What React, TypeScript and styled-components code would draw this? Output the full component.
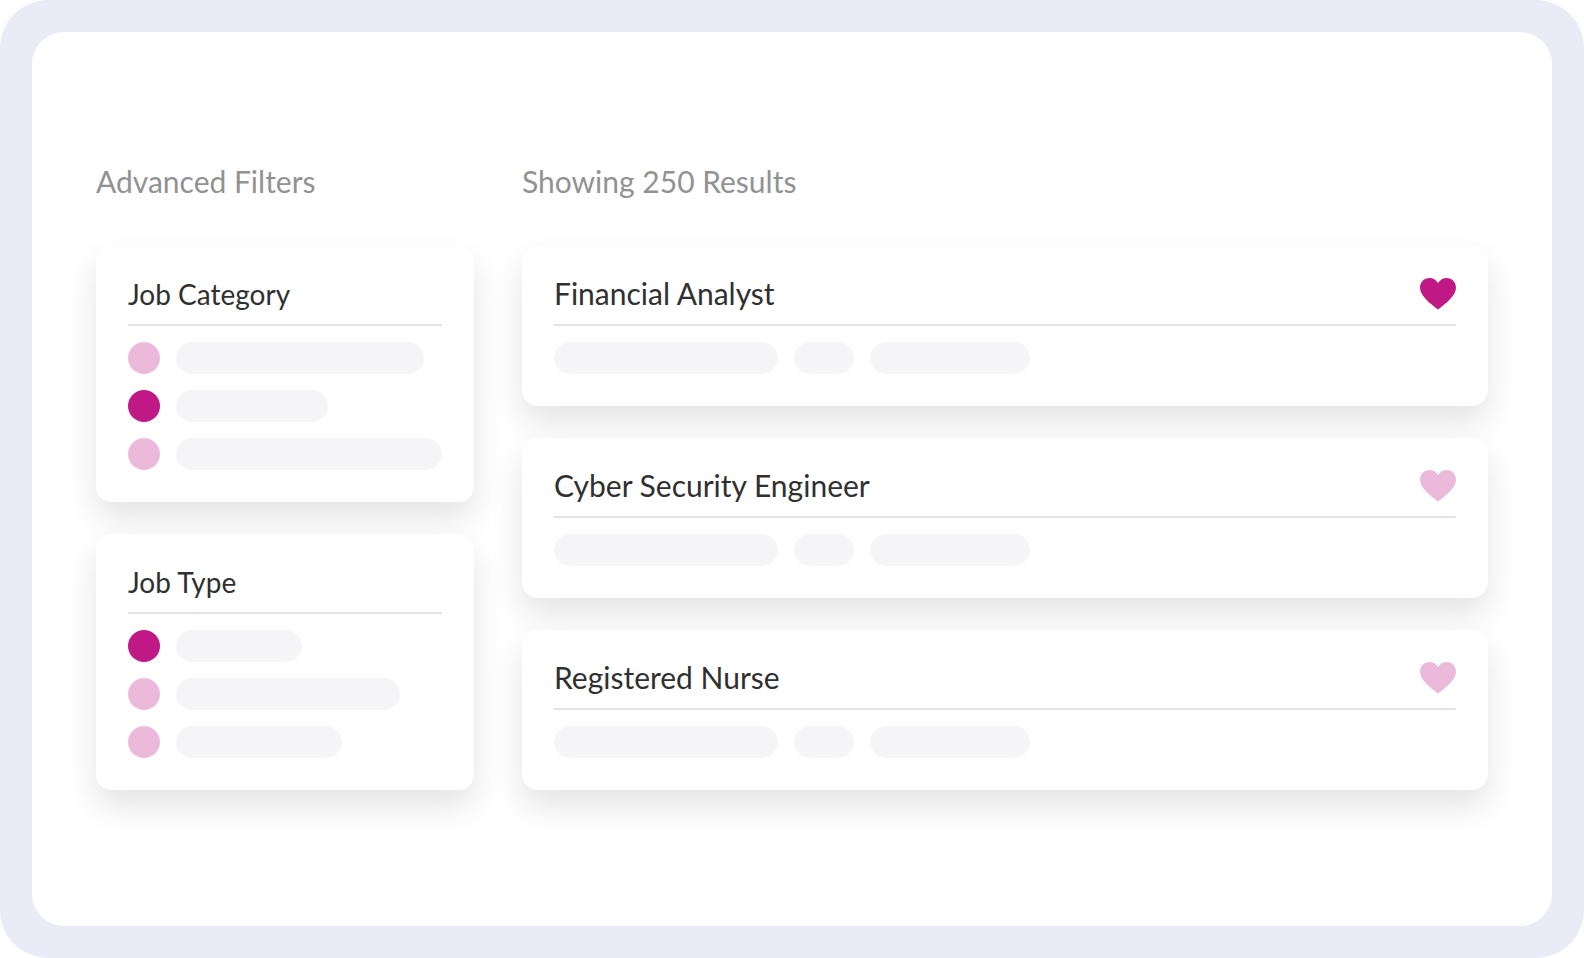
import React, { useState } from "react";
import styled, { createGlobalStyle } from "styled-components";

const GlobalStyle = createGlobalStyle`
  *, *::before, *::after { box-sizing: border-box; }
  body {
    margin: 0;
    background: #ffffff;
    font-family: Lato, "Liberation Sans", sans-serif;
    color: #303030;
  }
`;

const Frame = styled.div`
  display: flex;
  min-height: 100vh;
  padding: 32px;
  border-radius: 48px;
  background: #ebebf8;
`;

const Panel = styled.main`
  flex: 1;
  display: grid;
  grid-template-columns: 378px minmax(0, 1fr);
  column-gap: 48px;
  align-content: center;
  padding: 64px;
  border-radius: 32px;
  background: #ffffff;
`;

const Column = styled.section`
  display: flex;
  flex-direction: column;
  gap: 32px;
`;

const ColumnTitle = styled.h2`
  margin: 0 0 20px;
  font-size: 30px;
  line-height: 26px;
  font-weight: 400;
  color: #929292;
`;

const Card = styled.article`
  padding: 32px;
  border-radius: 16px;
  background: #ffffff;
  box-shadow: 0 16px 32px rgba(0, 0, 0, 0.11);
`;

const FilterCard = styled(Card).attrs({ as: "fieldset" })`
  min-width: 0;
  margin: 0;
  border: 0;
`;

const CardHeader = styled.div`
  display: flex;
  justify-content: space-between;
  align-items: flex-start;
  height: 48px;
  margin-bottom: 16px;
  border-bottom: 2px solid #e3e3e3;
`;

const CardTitle = styled.h3<{ $small?: boolean }>`
  margin: 0;
  font-size: ${(p) => (p.$small ? 28 : 30)}px;
  line-height: ${(p) => (p.$small ? 32 : 30)}px;
  font-weight: 400;
`;

const Options = styled.div`
  display: flex;
  flex-direction: column;
  gap: 16px;
`;

const Option = styled.label`
  display: flex;
  align-items: center;
  gap: 16px;
  cursor: pointer;
`;

const Radio = styled.input`
  appearance: none;
  flex: none;
  width: 32px;
  height: 32px;
  margin: 0;
  border-radius: 50%;
  background: #ebbadb;
  cursor: pointer;

  &:checked {
    background: #c01885;
  }
`;

const Pill = styled.span<{ $width: number }>`
  width: ${(p) => p.$width}px;
  height: 32px;
  border-radius: 16px;
  background: #f5f5f8;
`;

const Tags = styled.div`
  display: flex;
  gap: 16px;
`;

const SaveButton = styled.button<{ $saved: boolean }>`
  display: flex;
  padding: 0;
  border: 0;
  background: none;
  color: ${(p) => (p.$saved ? "#c01885" : "#ebbadb")};
  cursor: pointer;
`;

const filters = [
  { title: "Job Category", widths: [248, 152, 266], selected: 1 },
  { title: "Job Type", widths: [126, 224, 166], selected: 0 },
];

const jobs = ["Financial Analyst", "Cyber Security Engineer", "Registered Nurse"];
const tagWidths = [224, 60, 160];

function Filter({ title, widths, selected }: (typeof filters)[number]) {
  const [value, setValue] = useState(selected);
  return (
    <FilterCard aria-label={title}>
      <CardHeader>
        <CardTitle $small>{title}</CardTitle>
      </CardHeader>
      <Options>
        {widths.map((width, i) => (
          <Option key={i}>
            <Radio
              type="radio"
              name={title}
              aria-label={`${title} option ${i + 1}`}
              checked={value === i}
              onChange={() => setValue(i)}
            />
            <Pill $width={width} />
          </Option>
        ))}
      </Options>
    </FilterCard>
  );
}

function Job({ title, initiallySaved }: { title: string; initiallySaved: boolean }) {
  const [saved, setSaved] = useState(initiallySaved);
  return (
    <Card>
      <CardHeader>
        <CardTitle>{title}</CardTitle>
        <SaveButton
          type="button"
          $saved={saved}
          aria-label={`Save ${title}`}
          aria-pressed={saved}
          onClick={() => setSaved(!saved)}
        >
          <svg width="36" height="31" viewBox="0 0 36 31" fill="currentColor" aria-hidden="true">
            <path d="M18 31C17.5 31 17 30.8 16.6 30.4C10.5 25.6 0 18.2 0 9.6C0 4.2 4.1 0 9.4 0C13 0 16 1.8 18 5.1C20 1.8 23 0 26.6 0C31.9 0 36 4.2 36 9.6C36 18.2 25.5 25.6 19.4 30.4C19 30.8 18.5 31 18 31Z" />
          </svg>
        </SaveButton>
      </CardHeader>
      <Tags>
        {tagWidths.map((width) => (
          <Pill key={width} $width={width} />
        ))}
      </Tags>
    </Card>
  );
}

export default function App() {
  return (
    <>
      <GlobalStyle />
      <Frame>
        <Panel>
          <Column>
            <ColumnTitle>Advanced Filters</ColumnTitle>
            {filters.map((filter) => (
              <Filter key={filter.title} {...filter} />
            ))}
          </Column>
          <Column>
            <ColumnTitle>Showing 250 Results</ColumnTitle>
            {jobs.map((title, i) => (
              <Job key={title} title={title} initiallySaved={i === 0} />
            ))}
          </Column>
        </Panel>
      </Frame>
    </>
  );
}
